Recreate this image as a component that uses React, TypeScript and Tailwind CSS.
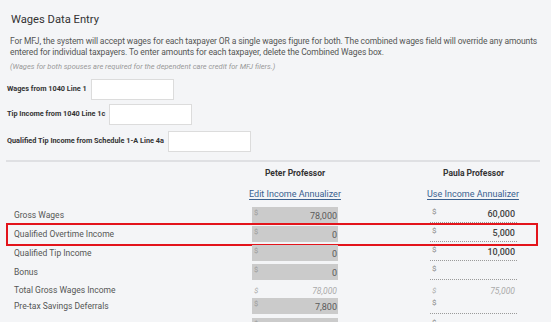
import React from 'react';

type Row = {
  label: string;
  peter: string;
  paula: string;
  total?: boolean;
  highlight?: boolean;
  h: string;
};

const rows: Row[] = [
  { label: 'Gross Wages', peter: '78,000', paula: '60,000', h: 'h-[19px]' },
  { label: 'Qualified Overtime Income', peter: '0', paula: '5,000', highlight: true, h: 'h-[19px]' },
  { label: 'Qualified Tip Income', peter: '0', paula: '10,000', h: 'h-[19px]' },
  { label: 'Bonus', peter: '0', paula: '', h: 'h-[18px]' },
  { label: 'Total Gross Wages Income', peter: '78,000', paula: '75,000', total: true, h: 'h-[16px]' },
  { label: 'Pre-tax Savings Deferrals', peter: '7,800', paula: '', h: 'h-[20px]' },
  { label: 'Other Pre-tax Deductions Subject to FICA', peter: '', paula: '', h: 'h-[20px]' },
];

function Field({ label, width }: { label: string; width: string }) {
  return (
    <div className="flex items-center">
      <span className="text-[7.3px] font-bold text-[#333] pl-[7px] pr-[4px]">{label}</span>
      <div className={`h-[21px] ${width} bg-white border border-[#dcdcdc]`} />
    </div>
  );
}

function PeterCell({ row }: { row: Row }) {
  if (row.total) {
    return (
      <div className="relative w-[86px] h-[16px] italic text-[#aaa]">
        <span className="absolute left-[2px] top-[3px] text-[8px]">$</span>
        <span className="absolute right-[1px] top-[3px] text-[8.5px]">{row.peter}</span>
      </div>
    );
  }
  return (
    <div className="relative w-[86px] h-[16px] bg-[#cbcbcb]">
      <span className="absolute left-[2px] top-[0px] text-[7.5px] text-[#9a9a9a]">$</span>
      <span className="absolute right-[1px] bottom-[0px] text-[9px] text-[#5a5a5a]">{row.peter}</span>
    </div>
  );
}

function PaulaCell({ row }: { row: Row }) {
  if (row.total) {
    return (
      <div className="relative w-[87px] h-[16px] italic text-[#aaa]">
        <span className="absolute left-[2px] top-[3px] text-[8px]">$</span>
        <span className="absolute right-[2px] top-[3px] text-[8.5px]">{row.paula}</span>
      </div>
    );
  }
  return (
    <div className="relative w-[87px] h-[16px] border-b border-dotted border-[#9a9a9a]">
      <span className="absolute left-[2px] top-[-1px] text-[8px] text-[#888]">$</span>
      <span className="absolute right-[2px] bottom-[1px] text-[9px] font-medium text-[#444]">{row.paula}</span>
    </div>
  );
}

export default function App() {
  return (
    <div className="w-[551px] h-[322px] overflow-hidden bg-[#f4f5f7] font-['Roboto',sans-serif] pt-[13px]">
      <h1 className="pl-[11px] text-[11.2px] leading-[14px] text-[#333]">Wages Data Entry</h1>
      <p className="mt-[9px] pl-[10px] pr-[6px] text-[8.5px] leading-[11px] tracking-[-0.1px] text-[#555]">
        For MFJ, the system will accept wages for each taxpayer OR a single wages figure for both. The combined wages field will override any amounts entered for individual taxpayers. To enter amounts for each taxpayer, delete the Combined Wages box.
      </p>
      <p className="mt-[4px] pl-[10px] text-[7.5px] leading-[10px] italic text-[#999]">
        (Wages for both spouses are required for the dependent care credit for MFJ filers.)
      </p>

      <div className="mt-[7px] flex flex-col gap-[4px]">
        <Field label="Wages from 1040 Line 1" width="w-[83px]" />
        <Field label="Tip Income from 1040 Line 1c" width="w-[83px]" />
        <div className="mt-[2px]">
          <Field label="Qualified Tip Income from Schedule 1-A Line 4a" width="w-[83px]" />
        </div>
      </div>

      <div className="mt-[8px] ml-[6px] w-[534px] h-[2px] bg-[#dfe0e3]" />

      <div className="mt-[5px] flex text-[8.5px] leading-[12px] font-bold text-[#333]">
        <div className="w-[252px]" />
        <div className="w-[86px] text-center">Peter Professor</div>
        <div className="w-[92px]" />
        <div className="w-[87px] text-center">Paula Professor</div>
      </div>
      <div className="mt-[9px] flex text-[9px] leading-[12px] text-[#3a6190]">
        <div className="w-[246px]" />
        <div className="w-[98px] text-center underline underline-offset-2">Edit Income Annualizer</div>
        <div className="w-[80px]" />
        <div className="w-[98px] text-center underline underline-offset-2">Use Income Annualizer</div>
      </div>

      <div className="mt-[7px] ml-[6px] w-[532px]">
        {rows.map((row) => (
          <div key={row.label} className={`relative flex ${row.h}`}>
            {row.highlight && (
              <div className="absolute left-0 right-0 top-[-3px] h-[23px] border-2 border-[#e3141b]" />
            )}
            <div className="w-[246px] h-[16px] pl-[8px] flex items-center text-[8.5px] text-[#555]">
              {row.label}
            </div>
            <PeterCell row={row} />
            <div className="w-[92px]" />
            <PaulaCell row={row} />
          </div>
        ))}
      </div>
    </div>
  );
}
